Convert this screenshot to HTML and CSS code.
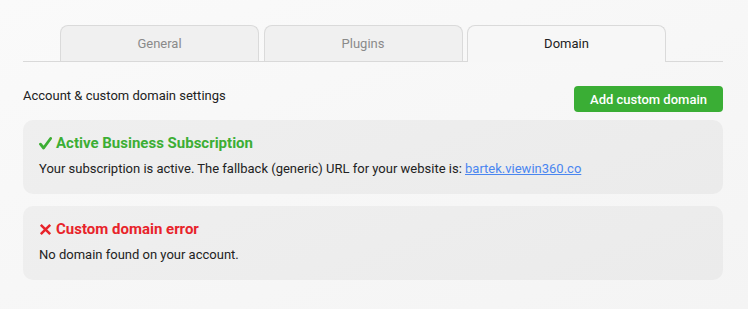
FILE: index.html
```html
<!DOCTYPE html>
<html>
<head>
  <link rel="stylesheet" href="styles.css">
</head>
<body>
  <div class="settings">
    <div class="tabs">
      <div class="tab">General</div>
      <div class="tab">Plugins</div>
      <div class="tab active">Domain</div>
    </div>

    <div class="header">
      <span class="header-title">Account &amp; custom domain settings</span>
      <button class="add-domain">Add custom domain</button>
    </div>

    <div class="card">
      <div class="card-title success">
        <svg class="mark" width="13" height="13" viewBox="0 0 13 13"><path d="M1.5 7.2 L4.6 11 L11.6 1.5" fill="none" stroke="currentColor" stroke-width="2.8" stroke-linecap="round" stroke-linejoin="round"/></svg>
        Active Business Subscription
      </div>
      <div class="card-text">Your subscription is active. The fallback (generic) URL for your website is: <a href="#">bartek.viewin360.co</a></div>
    </div>

    <div class="card">
      <div class="card-title error">
        <svg class="mark" width="13" height="13" viewBox="0 0 13 13"><path d="M1.8 1.8 L11.2 11.2 M11.2 1.8 L1.8 11.2" fill="none" stroke="currentColor" stroke-width="2.5"/></svg>
        Custom domain error
      </div>
      <div class="card-text">No domain found on your account.</div>
    </div>
  </div>
</body>
</html>
```

FILE: styles.css
```css
body {
  font-family: Roboto, "Liberation Sans", Arial, sans-serif;
  margin: 0;
  min-height: 100vh;
  background: linear-gradient(160deg, #fafafa 0%, #f4f4f4 100%);
  color: #222;
}

.settings {
  padding: 25px 25px 0 23px;
}

.tabs {
  display: flex;
  gap: 4.5px;
  padding-left: 37px;
  border-bottom: 1px solid #d9d9d9;
}

.tab {
  width: 197px;
  height: 35px;
  line-height: 35px;
  text-align: center;
  font-size: 13px;
  color: #8a8a8a;
  background: #f0f0f0;
  border: 1px solid #dadada;
  border-bottom: none;
  border-radius: 8px 8px 0 0;
}

.tab.active {
  color: #222;
  background: #f7f7f7;
  height: 36px;
  margin-bottom: -1px;
}

.header {
  display: flex;
  justify-content: space-between;
  align-items: center;
  margin-top: 24px;
}

.header-title {
  font-size: 13px;
  margin-top: -7px;
}

.add-domain {
  font-family: inherit;
  font-size: 13px;
  font-weight: 500;
  color: #fff;
  background: #3aae35;
  border: none;
  border-radius: 4px;
  height: 26px;
  width: 149px;
  padding: 0;
  cursor: pointer;
}

.card {
  background: linear-gradient(160deg, #efefef 0%, #ebebeb 100%);
  border-radius: 10px;
  padding: 13px 16px 16px;
  margin-top: 8px;
}

.card + .card {
  margin-top: 12px;
}

.card-title {
  display: flex;
  align-items: center;
  gap: 4px;
  font-size: 15px;
  font-weight: bold;
  line-height: 20px;
  margin-bottom: 7px;
}

.card-title.success {
  color: #3cae34;
}

.card-title.error {
  color: #e8232a;
}

.card-text {
  font-size: 13px;
  line-height: 18px;
  color: #222;
}

.card-text a {
  color: #4a86f0;
}
```
